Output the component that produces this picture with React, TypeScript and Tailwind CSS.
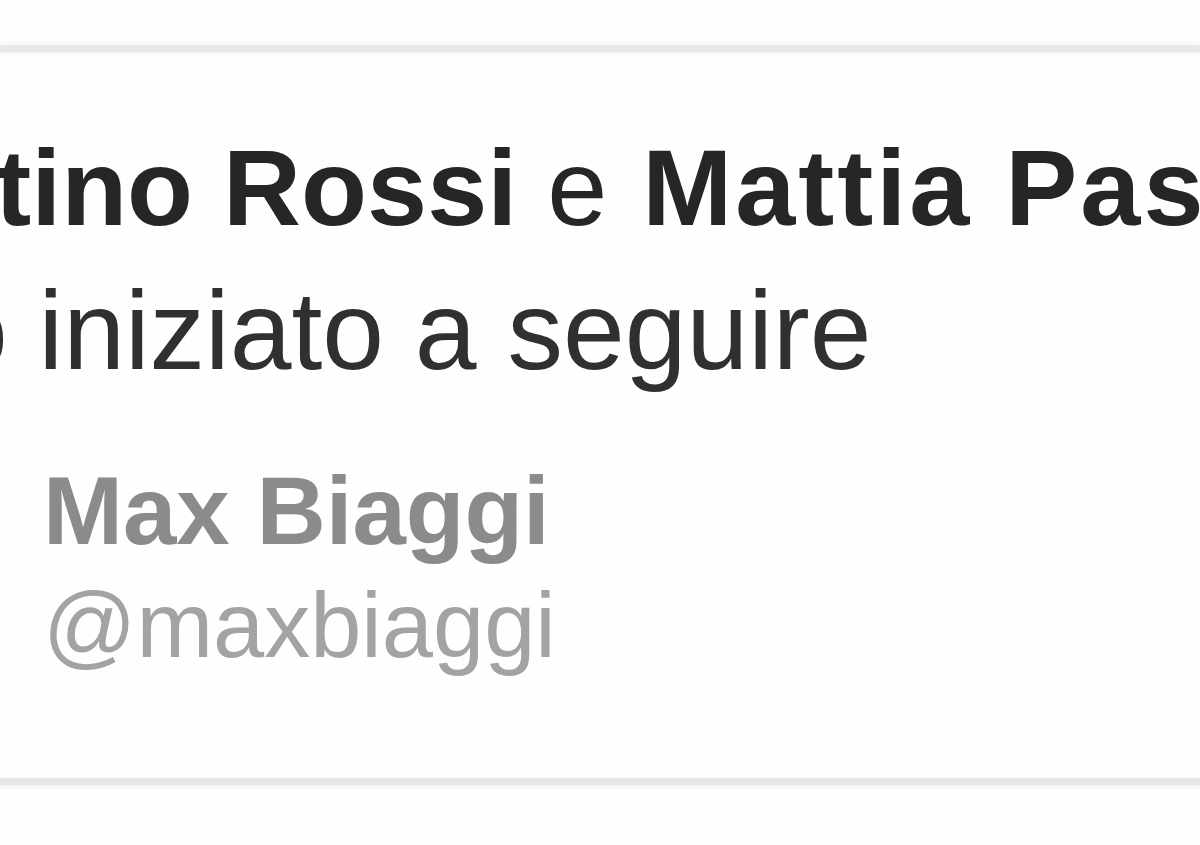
export default function App() {
  return (
    <div className="w-[1200px] h-[845px] overflow-hidden bg-[#fefefe] font-['Liberation_Sans',Arial,sans-serif] flex flex-col">
      {/* top divider */}
      <div className="mt-[45px] h-[7px] bg-[#e8e8e8] shadow-[0_0_4px_1px_#f1f1f1]" />

      <div className="flex flex-col pt-[82px]">
        <div className="ml-[-287px] whitespace-nowrap text-[108px] leading-none text-[#262626]">
          <span className="font-bold">Valentino Rossi</span> e{" "}
          <span className="font-bold tracking-[3px] ml-[5px]">Mattia Pasini</span>
        </div>
        <div className="ml-[-301px] mt-[34px] whitespace-nowrap text-[111px] leading-none text-[#303030]">
          hanno iniziato a seguire
        </div>

        <div className="pl-[43px] mt-[76px] flex flex-col">
          <div className="text-[96px] leading-none font-bold text-[#8b8b8b] whitespace-nowrap">
            Max Biaggi
          </div>
          <div className="mt-[20px] text-[92px] leading-none text-[#a3a3a3] whitespace-nowrap">
            @maxbiaggi
          </div>
        </div>
      </div>

      {/* bottom divider */}
      <div className="mt-[107px] h-[7px] bg-[#e6e6e6] shadow-[0_2px_4px_1px_#f3f3f3]" />
    </div>
  );
}
